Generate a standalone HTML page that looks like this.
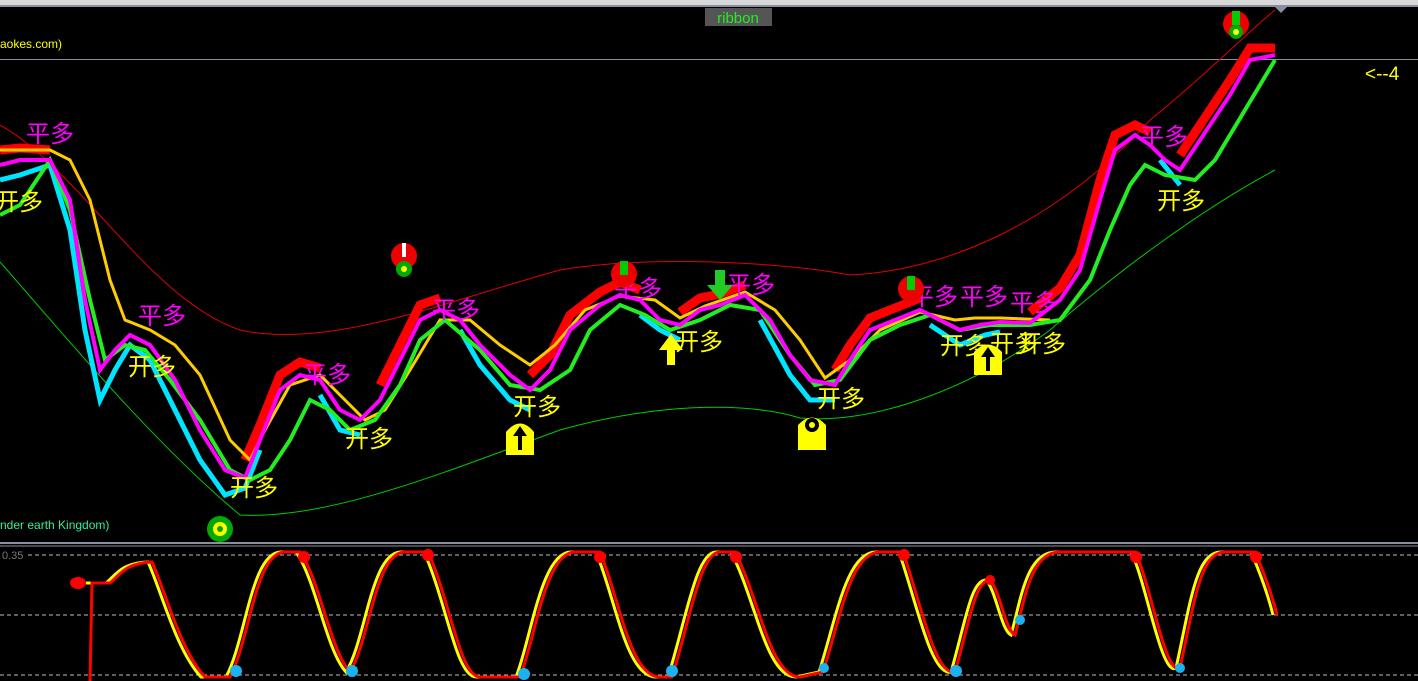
<!DOCTYPE html>
<html><head><meta charset="utf-8"><style>
html,body{margin:0;padding:0;background:#000;width:1418px;height:681px;overflow:hidden}
svg{display:block}
text{font-family:"Liberation Sans","Noto Sans CJK SC",sans-serif}
</style></head><body>
<svg width="1418" height="681" viewBox="0 0 1418 681" xmlns="http://www.w3.org/2000/svg">
<rect width="1418" height="681" fill="#000"/>
<rect x="0" y="0" width="1418" height="5" fill="#d8d8d8"/>
<line x1="0" y1="6" x2="1418" y2="6" stroke="#8a8fa0" stroke-width="2"/>
<line x1="0" y1="59.5" x2="1418" y2="59.5" stroke="#8a8fa0" stroke-width="1"/>
<rect x="705" y="8" width="67" height="18" fill="#555"/>
<text x="738" y="23" fill="#22ee22" font-size="15" text-anchor="middle">ribbon</text>
<polygon points="1275,7 1287,7 1281,13" fill="#8a8fa0"/>
<text x="0" y="48" fill="#ffff00" font-size="12">aokes.com)</text>
<text x="1365" y="80" fill="#ffff00" font-size="19">&lt;--4</text>
<path d="M0,125 C80,170 150,300 240,330 C330,350 450,300 560,270 C650,255 780,262 850,275 C950,270 1060,220 1150,120 C1200,80 1250,30 1275,10" fill="none" stroke="#e00000" stroke-width="1"/>
<path d="M0,262 C60,330 150,440 240,515 C330,520 450,470 560,430 C650,405 740,400 800,418 C870,425 970,390 1050,330 C1120,270 1200,210 1275,170" fill="none" stroke="#00cc00" stroke-width="1"/>
<path d="M0,180 L20,175 L50,165 L70,230 L85,330 L100,400 L115,370 L130,345 L150,360 L175,410 L200,460 L225,495 L245,488 L260,450 M320,395 L340,430 L360,435 M460,330 L480,365 L510,400 L530,410 M640,315 L660,330 L680,340 M760,320 L790,375 L810,400 L835,400 M930,325 L960,345 L985,335 L1000,332 M1160,160 L1180,185" fill="none" stroke="#00e5ff" stroke-width="5"/>
<path d="M0,150 L20,148 L50,150 M245,460 L260,425 L280,375 L300,362 L320,368 M380,385 L400,345 L420,305 L440,298 M530,375 L550,355 L570,315 L600,292 L620,282 L640,290 M680,312 L700,298 L720,294 L745,285 M835,370 L850,345 L870,318 L900,306 L920,298 M1030,312 L1060,288 L1080,255 L1100,180 L1115,135 L1135,125 L1150,132 M1180,155 L1200,125 L1230,80 L1250,48 L1275,48" fill="none" stroke="#ff0000" stroke-width="9"/>
<path d="M0,150 L50,150 L70,160 L90,200 L110,280 L125,320 L150,330 L175,345 L200,375 L230,440 L250,460 L265,430 L290,385 L320,375 L345,400 L365,420 L385,410 L410,370 L440,320 L470,320 L500,345 L530,365 L555,345 L585,310 L620,296 L655,300 L680,318 L705,306 L745,292 L775,310 L800,340 L825,378 L850,360 L880,330 L920,312 L955,320 L975,318 L1000,318 L1050,320" fill="none" stroke="#ffcc00" stroke-width="3"/>
<path d="M0,215 L20,205 L50,160 L70,210 L90,300 L105,360 L125,345 L145,350 L170,380 L200,420 L230,470 L250,480 L270,470 L290,440 L310,400 L330,410 L350,430 L375,420 L400,385 L420,340 L445,320 L480,350 L510,385 L540,390 L570,370 L590,330 L620,305 L645,315 L670,330 L700,320 L730,305 L760,310 L790,355 L815,385 L840,380 L870,340 L900,325 L930,315 L960,330 L990,325 L1030,325 L1060,320 L1090,280 L1110,230 L1130,185 L1145,165 L1165,175 L1195,180 L1215,160 L1245,110 L1260,85 L1275,60" fill="none" stroke="#22ee22" stroke-width="4"/>
<path d="M0,165 L20,160 L50,160 L70,200 L85,300 L100,370 L115,350 L130,335 L150,345 L175,380 L200,430 L225,470 L245,478 L260,440 L280,390 L300,375 L320,380 L340,410 L360,420 L380,400 L400,360 L420,320 L440,310 L460,320 L480,345 L510,375 L530,390 L550,370 L570,330 L600,305 L620,295 L640,300 L660,320 L680,325 L700,310 L720,305 L745,295 L770,320 L790,355 L810,380 L835,385 L850,360 L870,330 L900,318 L920,310 L940,320 L960,330 L980,325 L1000,322 L1030,323 L1060,300 L1080,270 L1100,200 L1115,150 L1135,135 L1150,145 L1165,160 L1180,170 L1200,140 L1230,95 L1250,60 L1275,55" fill="none" stroke="#ff00ff" stroke-width="4"/>
<g font-size="24" fill="#ff00ff">
<text x="26" y="142">平多</text><text x="138" y="324">平多</text><text x="303" y="383">平多</text><text x="432" y="318">平多</text><text x="614" y="297">平多</text><text x="727" y="293">平多</text><text x="910" y="305">平多</text><text x="960" y="305">平多</text><text x="1010" y="311">平多</text><text x="1140" y="145">平多</text>
</g>
<g font-size="24" fill="#ffff00">
<text x="-5" y="210">开多</text><text x="128" y="375">开多</text><text x="345" y="447">开多</text><text x="230" y="496">开多</text><text x="513" y="415">开多</text><text x="675" y="350">开多</text><text x="817" y="407">开多</text><text x="940" y="354">开多</text><text x="990" y="352">开多</text><text x="1018" y="352">开多</text><text x="1157" y="209">开多</text>
</g>
<g>
<circle cx="404" cy="256" r="13" fill="#e00"/><rect x="402" y="243" width="4" height="14" fill="#fff"/><circle cx="404" cy="269" r="8" fill="#0a0"/><circle cx="404" cy="269" r="3" fill="#ff0"/>
<circle cx="624" cy="274" r="13" fill="#e00"/><rect x="620" y="261" width="8" height="14" fill="#0c0"/>
<circle cx="911" cy="289" r="13" fill="#e00"/><rect x="907" y="276" width="8" height="14" fill="#0c0"/>
<circle cx="1236" cy="24" r="13" fill="#e00"/><rect x="1232" y="11" width="8" height="14" fill="#0c0"/><circle cx="1236" cy="32" r="7" fill="#0a0"/><circle cx="1236" cy="32" r="3" fill="#ff0"/>
<circle cx="220" cy="529" r="13" fill="#0a0"/><circle cx="220" cy="529" r="7" fill="#ff0"/><circle cx="220" cy="529" r="3" fill="#0a0"/>
<path d="M506,455 L506,432 Q520,415 534,432 L534,455 Z" fill="#ff0"/><path d="M520,426 L513,436 L518,436 L518,450 L522,450 L522,436 L527,436 Z" fill="#000"/>
<path d="M974,375 L974,352 Q988,337 1002,352 L1002,375 Z" fill="#ff0"/><path d="M988,347 L981,357 L986,357 L986,371 L990,371 L990,357 L995,357 Z" fill="#000"/>
<path d="M798,450 L798,425 Q812,410 826,425 L826,450 Z" fill="#ff0"/><circle cx="812" cy="425" r="7" fill="#000"/><circle cx="812" cy="425" r="3" fill="#ff0"/>
<path d="M671,334 L659,350 L667,350 L667,365 L675,365 L675,350 L683,350 Z" fill="#ff0"/>
<path d="M720,300 L707,285 L715,285 L715,270 L725,270 L725,285 L733,285 Z" fill="#22cc22"/>
</g>
<text x="0" y="529" fill="#33ee99" font-size="12" font-family="Liberation Mono,monospace">nder earth Kingdom)</text>
<line x1="0" y1="543" x2="1418" y2="543" stroke="#8a8fa0" stroke-width="2"/>
<line x1="0" y1="546" x2="1418" y2="546" stroke="#8a8fa0" stroke-width="1"/>
<g stroke="#bbb" stroke-dasharray="4,3" stroke-width="1">
<line x1="28" y1="555" x2="1418" y2="555"/><line x1="0" y1="615" x2="1418" y2="615"/><line x1="0" y1="675" x2="1418" y2="675"/>
</g>
<text x="2" y="559" fill="#777" font-size="11">0.35</text>
<path d="M90,583 L110,583 C120,575 125,563 152,562 C165,590 180,650 205,677 L230,677 C250,640 255,552 285,552 L300,552 C320,580 330,650 350,672 C370,640 375,552 405,552 L428,552 C450,600 460,677 480,677 L520,677 C535,640 545,552 575,552 L600,552 C620,600 630,677 660,677 L672,677 C690,620 700,552 720,552 L735,552 C760,600 770,677 800,677 L823,672 C840,620 850,552 880,552 L903,552 C920,600 935,677 955,672 C970,620 975,580 990,580 C1000,590 1005,630 1015,635 C1025,600 1030,552 1060,552 L1135,552 C1150,580 1165,677 1180,668 C1195,600 1200,552 1225,552 L1255,552 C1265,575 1272,595 1277,615" fill="none" stroke="#ffff00" stroke-width="3" transform="translate(-4,0)"/>
<path d="M90,681 L92,583 L110,583 C120,575 125,563 152,562 C165,590 180,650 205,677 L230,677 C250,640 255,552 285,552 L300,552 C320,580 330,650 350,672 C370,640 375,552 405,552 L428,552 C450,600 460,677 480,677 L520,677 C535,640 545,552 575,552 L600,552 C620,600 630,677 660,677 L672,677 C690,620 700,552 720,552 L735,552 C760,600 770,677 800,677 L823,672 C840,620 850,552 880,552 L903,552 C920,600 935,677 955,672 C970,620 975,580 990,580 C1000,590 1005,630 1015,635 C1025,600 1030,552 1060,552 L1135,552 C1150,580 1165,677 1180,668 C1195,600 1200,552 1225,552 L1255,552 C1265,575 1272,595 1277,615" fill="none" stroke="#ff0000" stroke-width="3"/>
<ellipse cx="78" cy="583" rx="8" ry="6" fill="#f00"/>
<g fill="#f00"><circle cx="304" cy="557" r="6"/><circle cx="428" cy="555" r="6"/><circle cx="600" cy="557" r="6"/><circle cx="736" cy="557" r="6"/><circle cx="904" cy="555" r="6"/><circle cx="990" cy="580" r="5"/><circle cx="1136" cy="557" r="6"/><circle cx="1256" cy="557" r="6"/></g>
<g fill="#1ab2f0"><circle cx="236" cy="671" r="6"/><circle cx="352" cy="671" r="6"/><circle cx="524" cy="674" r="6"/><circle cx="672" cy="671" r="6"/><circle cx="824" cy="668" r="5"/><circle cx="956" cy="671" r="6"/><circle cx="1020" cy="620" r="5"/><circle cx="1180" cy="668" r="5"/></g>
</svg>
</body></html>
